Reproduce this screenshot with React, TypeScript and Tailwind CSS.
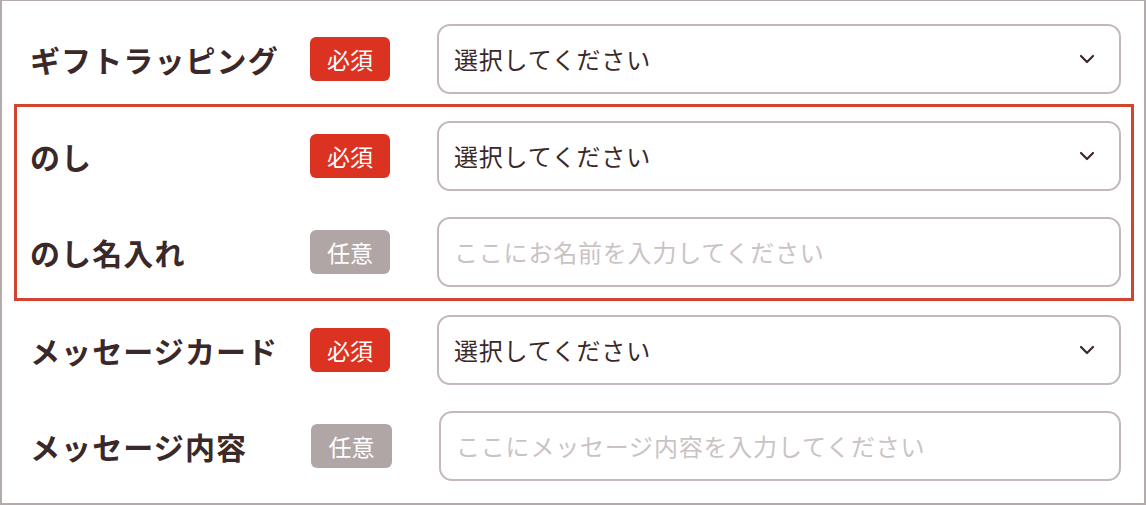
import React from "react";

const font = { fontFamily: '"Noto Sans CJK JP", "Noto Sans", sans-serif' };

function Chevron() {
  return (
    <svg width="16" height="10" viewBox="0 0 16 10" className="shrink-0">
      <path d="M2 2 L8 8 L14 2" fill="none" stroke="#3b2828" strokeWidth="2.2" strokeLinecap="round" strokeLinejoin="round" />
    </svg>
  );
}

function Row({
  label,
  required,
  kind,
  text,
  shift = false,
}: {
  label: string;
  required: boolean;
  kind: "select" | "input";
  text: string;
  shift?: boolean;
}) {
  return (
    <div className="flex items-center h-[70px]">
      <div className="w-[280px] shrink-0 text-[30px] font-bold text-[#3b2828] leading-none tracking-[1.1px] whitespace-nowrap">
        {label}
      </div>
      <div
        className={
          (required ? "bg-[#dc3221] " : "bg-[#b1a6a6] ") +
          (shift ? "ml-[1px] w-[81px] " : "w-[80px] ") +
          "h-[44px] rounded-[6px] shrink-0 flex items-center justify-center text-white text-[23px] leading-none"
        }
      >
        {required ? "必須" : "任意"}
      </div>
      <div className="ml-[47px] flex-1 h-[70px] rounded-[13px] border-2 border-[#c4b9b9] flex items-center pl-[15px] pr-[24px]">
        <span
          className={
            (kind === "select" ? "text-[#3b2828] " : "text-[#cbc3c3] ") +
            "flex-1 text-[24px] tracking-[0.8px] leading-none whitespace-nowrap"
          }
        >
          {text}
        </span>
        {kind === "select" && <Chevron />}
      </div>
    </div>
  );
}

export default function App() {
  return (
    <div
      style={font}
      className="w-[1146px] h-[505px] bg-white border-[#b3abab] border-t border-l-2 border-r-2 border-b-2 pl-[12px] pr-[10px] flex flex-col"
    >
      <div className="mt-[23px] pl-[16px] pr-[13px]">
        <Row label="ギフトラッピング" required kind="select" text="選択してください" />
      </div>
      <div className="mt-[10px] border-[3px] border-[#d2442f] pl-[13px] pr-[10px] pt-[14px] pb-[11px] flex flex-col gap-[26px]">
        <Row label="のし" required kind="select" text="選択してください" />
        <Row label="のし名入れ" required={false} kind="input" text="ここにお名前を入力してください" />
      </div>
      <div className="mt-[14px] pl-[16px] pr-[13px] flex flex-col gap-[26px]">
        <Row label="メッセージカード" required kind="select" text="選択してください" />
        <Row label="メッセージ内容" required={false} kind="input" text="ここにメッセージ内容を入力してください" shift />
      </div>
    </div>
  );
}
